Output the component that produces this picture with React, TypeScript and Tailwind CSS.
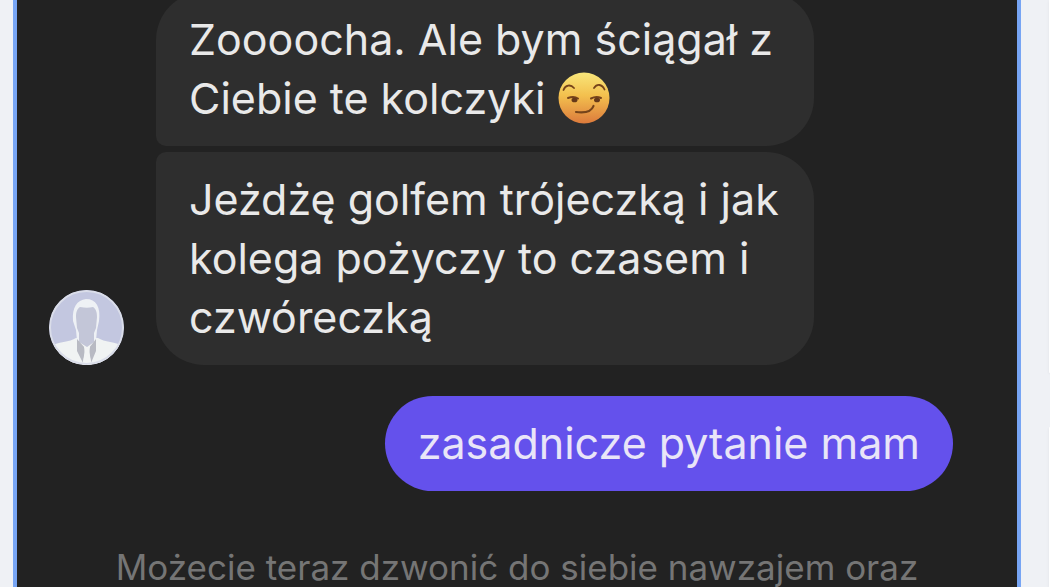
import type { ReactNode } from 'react';

function SmirkEmoji() {
  return (
    <svg viewBox="0 0 52 52" className="ml-3 inline-block size-[52px] align-[-10px]" role="img" aria-label="smirking face">
      <defs>
        <linearGradient id="smirk-face" x1="0" y1="0" x2="0" y2="1">
          <stop offset="0" stopColor="#f8e67a" />
          <stop offset="0.45" stopColor="#f3c04e" />
          <stop offset="1" stopColor="#dc7a3c" />
        </linearGradient>
      </defs>
      <circle cx="26" cy="26" r="25.5" fill="url(#smirk-face)" />
      <g fill="none" stroke="#75431a" strokeLinecap="round">
        <path d="M5.500 18c1.800-5 7-6 10.500-2" strokeWidth="1.800" />
        <path d="M36 16c3-4.500 8-4 10.500 1.500" strokeWidth="1.800" />
        <path d="M10 26q6-2 10 .5" strokeWidth="2" />
        <path d="M33 26.500q5-2.500 10-.5" strokeWidth="2" />
        <path d="M18 40c6 .8 15 1.200 17.500-6" strokeWidth="2.200" />
      </g>
      <ellipse cx="16.500" cy="28" rx="3" ry="2.300" fill="#65391a" />
      <ellipse cx="39" cy="28" rx="3" ry="2.300" fill="#65391a" />
    </svg>
  );
}

function Avatar() {
  return (
    <svg viewBox="0 0 75 75" className="size-[75px] shrink-0" role="img" aria-label="avatar">
      <defs>
        <clipPath id="avatar-clip">
          <circle cx="37.500" cy="37.500" r="37.500" />
        </clipPath>
      </defs>
      <g clipPath="url(#avatar-clip)">
        <rect width="75" height="75" fill="#c3c7e0" />
        <path d="M0 56c9-4 21-4 27-8h22c6 4 18 4 26 8v19H0z" fill="#f0f3f3" />
        <path d="M24 31c-1-14 4-21 13-22 10 0 15 8 13 22l-2 9-1 11H28l-1-11z" fill="#eef1f5" />
        <path d="M27 27c0-5 1-8 4-10 5 1 9 1 13 0 3 2 4 5 4 10l-1 11-2 5v9l-7 5-8-5v-9l-2-5z" fill="#c3c6d8" />
        <path d="M28 49l8 9-2 15-6-12zM47 49l-7 9 2 15 5-12z" fill="#b8bac3" />
        <path d="M35 57h6l-1 6 3 12H33l3-12z" fill="#f2f4f4" />
        <circle cx="37.500" cy="37.500" r="36.500" fill="none" stroke="#dadde9" strokeWidth="2" />
      </g>
    </svg>
  );
}

function Received({ className, children }: { className: string; children: ReactNode }) {
  return (
    <p className={`w-full bg-[#2e2e2e] pr-6 pl-[33px] text-[43px] leading-[59px] text-[#e9e9e9] ${className}`}>
      {children}
    </p>
  );
}

export default function App() {
  return (
    <div className="flex h-screen overflow-hidden bg-[#eff1f5] font-['Inter','Liberation_Sans',sans-serif]">
      <main className="ml-[13px] min-w-0 flex-1 overflow-hidden border-x-4 border-[#77a5f4] bg-[#222222]">
        <section className="-mt-2 flex items-end gap-8 pl-8">
          <Avatar />
          <div className="flex w-[658px] flex-col gap-[6px]">
            <Received className="rounded-[48px] rounded-bl-[10px] py-[18px]">
              Zoooocha. Ale bym ściągał z<br />
              Ciebie te kolczyki
              <SmirkEmoji />
            </Received>
            <Received className="rounded-[48px] rounded-tl-[10px] py-[18px]">
              Jeżdżę golfem trójeczką i jak
              <br />
              kolega pożyczy to czasem i<br />
              czwóreczką
            </Received>
          </div>
        </section>
        <div className="mt-[31px] flex justify-end pr-16">
          <p className="rounded-full bg-[#6451ec] px-[33px] py-[18px] text-[43px] leading-[59px] text-[#e9e5f8]">
            zasadnicze pytanie mam
          </p>
        </div>
        <p className="mt-[52px] text-center text-[35px] leading-[48px] whitespace-nowrap text-[#757575]">
          Możecie teraz dzwonić do siebie nawzajem oraz
        </p>
      </main>
      <aside className="flex w-[29px] shrink-0 flex-col items-end gap-[54px]">
        <div className="h-[373px] w-px shrink-0 rounded-bl bg-white shadow" />
        <div className="w-px flex-1 rounded-tl bg-white shadow" />
      </aside>
    </div>
  );
}
